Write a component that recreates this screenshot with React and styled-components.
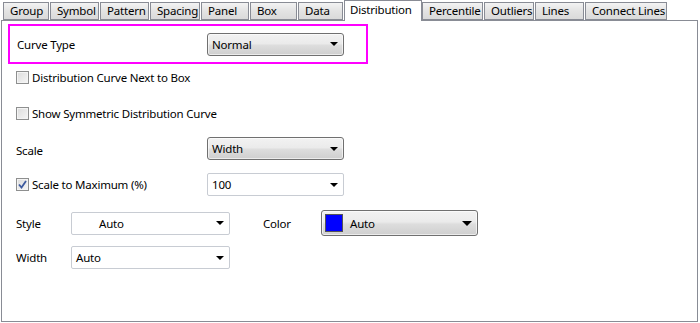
import React from "react";
import styled, { createGlobalStyle } from "styled-components";

const GlobalStyle = createGlobalStyle`
  html, body {
    margin: 0;
    padding: 0;
    background: #ffffff;
  }
  body {
    font-family: "Noto Sans", "Open Sans", sans-serif;
    font-size: 11.5px;
    letter-spacing: -0.2px;
    color: #000;
  }
`;

const Page = styled.div`
  width: 700px;
  height: 323px;
  overflow: hidden;
  background: #fff;
`;

const TabStrip = styled.div`
  display: flex;
  align-items: flex-end;
  height: 20px;
  padding-left: 3px;
`;

const Tab = styled.div`
  position: relative;
  box-sizing: border-box;
  width: ${(p) => p.$w}px;
  margin-right: ${(p) => (p.$selected ? 0 : 1)}px;
  height: ${(p) => (p.$selected ? 21 : 18)}px;
  margin-bottom: ${(p) => (p.$selected ? -1 : 0)}px;
  z-index: ${(p) => (p.$selected ? 2 : 1)};
  border: 1px solid #898c95;
  border-bottom: ${(p) => (p.$selected ? "none" : "1px solid #898c95")};
  background: ${(p) =>
    p.$selected ? "#ffffff" : "linear-gradient(#f3f3f3, #e3e3e3 50%, #dadada)"};
  display: flex;
  align-items: ${(p) => (p.$selected ? "flex-start" : "center")};
  padding-top: ${(p) => (p.$selected ? 2 : 0)}px;
  padding-left: ${(p) => (p.$selected ? 5 : 6)}px;
  white-space: nowrap;
  line-height: 14px;
`;

const Panel = styled.div`
  box-sizing: border-box;
  margin-left: 1px;
  width: 697px;
  height: 302px;
  border: 1px solid #898c95;
  padding: 3px 0 0 6px;
  display: flex;
  flex-direction: column;
`;

const Highlight = styled.div`
  box-sizing: border-box;
  width: 360px;
  height: 40px;
  border: 2px solid #ff00ff;
  display: flex;
  align-items: center;
  padding-left: 7px;
`;

const Row = styled.div`
  display: flex;
  align-items: center;
  height: ${(p) => p.$h}px;
  margin-top: ${(p) => p.$mt}px;
  padding-left: 8px;
`;

const Label = styled.div`
  width: ${(p) => p.$w}px;
  flex-shrink: 0;
  white-space: nowrap;
  margin-top: ${(p) => p.$dy || 0}px;
`;

const CheckLabel = styled.label`
  display: flex;
  align-items: center;
  width: ${(p) => p.$w || "auto"};
  white-space: nowrap;
`;

const Box = styled.span`
  box-sizing: border-box;
  width: 13px;
  height: 13px;
  border: 1px solid #8e8f8f;
  background: linear-gradient(135deg, #dcdcdc, #f6f6f6);
  box-shadow: inset 0 0 0 1px #f4f4f4;
  margin-right: 3px;
  display: flex;
  align-items: center;
  justify-content: center;
  flex-shrink: 0;
`;

const Combo = styled.div`
  position: relative;
  box-sizing: border-box;
  width: ${(p) => p.$w}px;
  height: ${(p) => p.$h || 23}px;
  display: flex;
  align-items: center;
  padding-left: ${(p) => p.$pl || 4}px;
  white-space: nowrap;
  border-radius: ${(p) => (p.$button ? 3 : 2)}px;
  border: 1px solid ${(p) => (p.$button ? "#707070" : "#c8ccd3")};
  background: ${(p) =>
    p.$button ? "linear-gradient(#f2f2f2, #ebebeb 45%, #dddddd 55%, #cfcfcf)" : "#ffffff"};
  box-shadow: ${(p) => (p.$button ? "inset 0 0 0 1px rgba(255,255,255,0.6)" : "none")};
`;

const Arrow = styled.span`
  position: absolute;
  right: 5px;
  top: 50%;
  margin-top: -2px;
  width: 0;
  height: 0;
  border-left: ${(p) => (p.$big ? 5 : 4)}px solid transparent;
  border-right: ${(p) => (p.$big ? 5 : 4)}px solid transparent;
  border-top: ${(p) => (p.$big ? 5 : 4)}px solid #000;
`;

const Swatch = styled.span`
  box-sizing: border-box;
  width: 18px;
  height: 18px;
  background: #0000ff;
  border: 1px solid #555;
  margin-right: 7px;
`;

const Gap = styled.div`
  width: ${(p) => p.$w}px;
  flex-shrink: 0;
`;

const tabs = [
  ["Group", 46],
  ["Symbol", 49],
  ["Pattern", 49],
  ["Spacing", 50],
  ["Panel", 48],
  ["Box", 47],
  ["Data", 45],
  ["Distribution", 78],
  ["Percentile", 61],
  ["Outliers", 50],
  ["Lines", 49],
  ["Connect Lines", 82],
];

function CheckBox({ checked }) {
  return (
    <Box>
      {checked && (
        <svg width="9" height="9" viewBox="0 0 9 9">
          <path d="M1 4.5 L3.5 7.5 L8 1" fill="none" stroke="#3d5a9e" strokeWidth="1.8" />
        </svg>
      )}
    </Box>
  );
}

function Select({ value, w, h, button, pl, big }) {
  return (
    <Combo $w={w} $h={h} $button={button} $pl={pl}>
      {value}
      <Arrow $big={big} />
    </Combo>
  );
}

export default function App() {
  return (
    <Page>
      <GlobalStyle />
      <TabStrip>
        {tabs.map(([name, w]) => (
          <Tab key={name} $w={w} $selected={name === "Distribution"}>
            {name}
          </Tab>
        ))}
      </TabStrip>
      <Panel>
        <Highlight>
          <Label $w={190}>Curve Type</Label>
          <Select value="Normal" w={137} button />
        </Highlight>

        <Row $h={13} $mt={7}>
          <CheckLabel>
            <CheckBox />
            Distribution Curve Next to Box
          </CheckLabel>
        </Row>

        <Row $h={13} $mt={23}>
          <CheckLabel>
            <CheckBox />
            Show Symmetric Distribution Curve
          </CheckLabel>
        </Row>

        <Row $h={23} $mt={17}>
          <Label $w={191} $dy={3}>Scale</Label>
          <Select value="Width" w={137} button />
        </Row>

        <Row $h={23} $mt={13}>
          <CheckLabel $w="191px">
            <CheckBox checked />
            Scale to Maximum (%)
          </CheckLabel>
          <Select value="100" w={137} />
        </Row>

        <Row $h={26} $mt={14}>
          <Label $w={55}>Style</Label>
          <Select value="Auto" w={159} pl={27} />
          <Gap $w={33} />
          <Label $w={58}>Color</Label>
          <Combo $w={157} $h={26} $button $pl={3}>
            <Swatch />
            Auto
            <Arrow $big />
          </Combo>
        </Row>

        <Row $h={23} $mt={10}>
          <Label $w={55}>Width</Label>
          <Select value="Auto" w={159} />
        </Row>
      </Panel>
    </Page>
  );
}
